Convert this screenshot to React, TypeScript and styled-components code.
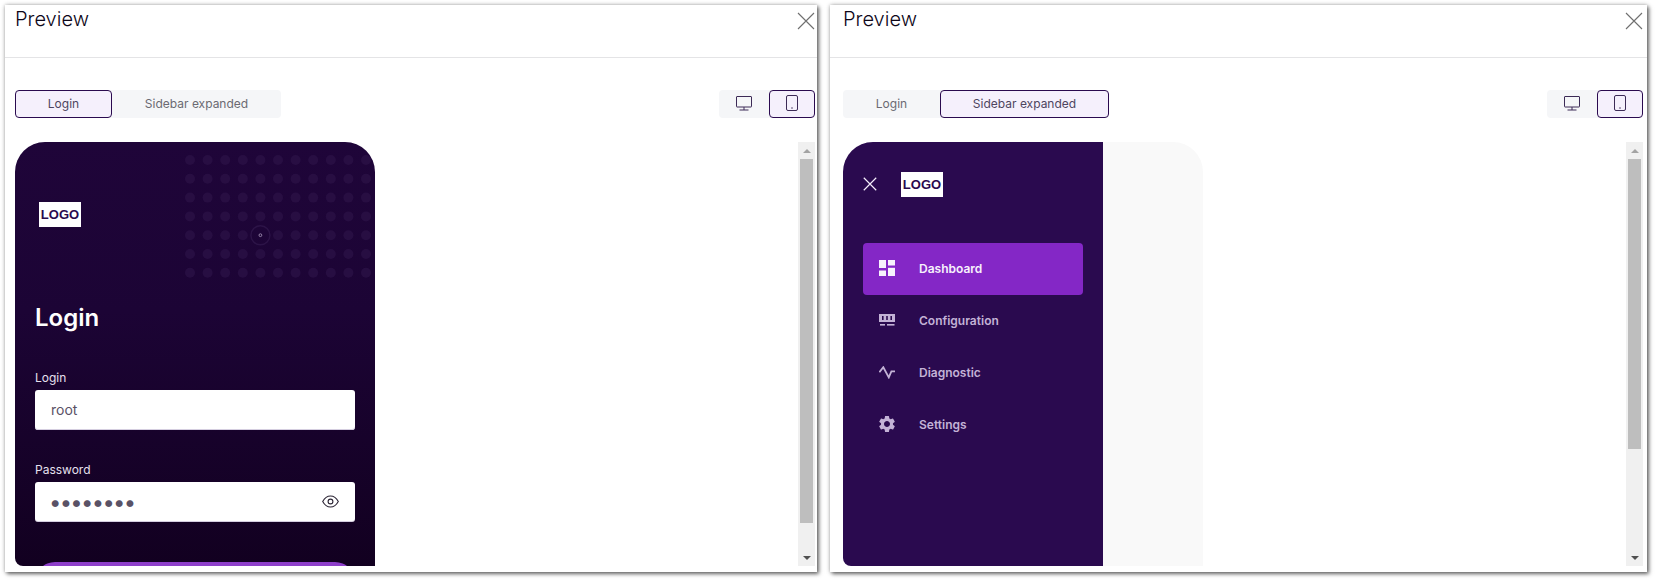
import React, { FC } from 'react';
import styled, { createGlobalStyle } from 'styled-components';
import { MdSettings } from 'react-icons/md';

const Global = createGlobalStyle`
  html, body {
    margin: 0;
    padding: 0;
    background: #fff;
    font-family: Inter, "Liberation Sans", sans-serif;
  }
  * { box-sizing: border-box; }
`;

const Page = styled.div`
  display: flex;
  gap: 13px;
  width: 1656px;
  height: 581px;
  padding: 5px 9px 9px 5px;
  overflow: hidden;
`;

const Panel = styled.section<{ $width: number; $left: number; $right: number }>`
  display: flex;
  flex-direction: column;
  width: ${p => p.$width}px;
  flex: none;
  height: 567px;
  background: #fff;
  box-shadow: 2px 2px 4px rgba(0, 0, 0, 0.55), 0 0 4px rgba(0, 0, 0, 0.3);
  --left: ${p => p.$left}px;
  --right: ${p => p.$right}px;
`;

const Header = styled.header`
  display: flex;
  justify-content: space-between;
  height: 53px;
  flex: none;
  padding: 1px var(--right) 0 var(--left);
  border-bottom: 1px solid #e4e4e6;
`;

const Title = styled.h2`
  margin: 0;
  font-size: 20px;
  line-height: 26px;
  font-weight: 300;
  color: #0e0618;
`;

const CloseButton = styled.button`
  display: block;
  width: 18px;
  height: 18px;
  margin-top: 6px;
  padding: 0;
  border: 0;
  background: none;
  color: #6f6f6f;
`;

const Toolbar = styled.div`
  display: flex;
  justify-content: space-between;
  margin-top: 32px;
  padding: 0 var(--right) 0 var(--left);
`;

const Segments = styled.div`
  display: flex;
  height: 28px;
  background: #f5f6f8;
  border-radius: 4px;
`;

const Segment = styled.button<{ $active?: boolean; $width: number }>`
  display: flex;
  align-items: center;
  justify-content: center;
  width: ${p => p.$width}px;
  height: 28px;
  padding: 0 0 2px;
  font-family: inherit;
  font-size: 12px;
  color: ${p => (p.$active ? '#4e4560' : '#6b6a72')};
  background: ${p => (p.$active ? '#f5f0fc' : 'transparent')};
  border: 1px solid ${p => (p.$active ? '#2a0a4f' : 'transparent')};
  border-radius: 4px;
`;

const Stage = styled.div`
  display: flex;
  justify-content: space-between;
  height: 424px;
  margin-top: 24px;
  padding: 0 var(--right) 0 var(--left);
`;

const Phone = styled.div<{ $variant: 'login' | 'sidebar' }>`
  position: relative;
  display: flex;
  flex-direction: column;
  width: 360px;
  height: 424px;
  overflow: hidden;
  border-radius: 30px 30px 0 8px;
  background: ${p =>
    p.$variant === 'login'
      ? 'linear-gradient(180deg, #1f0539 0%, #1c0435 40%, #120020 100%)'
      : '#f9f9f9'};
`;

const Dots = styled.svg`
  position: absolute;
  top: 12px;
  left: 169px;
  width: 191px;
  height: 128px;
`;

const LoginContent = styled.div`
  position: relative;
  display: flex;
  flex-direction: column;
  padding: 60px 20px 0;
`;

const Logo = styled.div`
  display: flex;
  align-items: center;
  justify-content: center;
  width: 42px;
  height: 25px;
  flex: none;
  font-family: "Liberation Sans", Arial, sans-serif;
  font-size: 13px;
  font-weight: 700;
  color: #2a0a4f;
  background: #fff;
`;

const LoginLogo = styled(Logo)`
  margin-left: 4px;
`;

const Heading = styled.h1`
  margin: 75px 0 1px;
  font-size: 24px;
  line-height: 32px;
  font-weight: 600;
  color: #fff;
`;

const FieldLabel = styled.label`
  display: block;
  font-size: 12px;
  line-height: 16px;
  color: #e6e0ee;
`;

const LoginLabel = styled(FieldLabel)`
  margin-top: 35px;
  margin-bottom: 4px;
`;

const PasswordLabel = styled(FieldLabel)`
  margin-top: 32px;
  margin-bottom: 4px;
`;

const FieldBox = styled.div<{ $segmented?: boolean }>`
  display: flex;
  align-items: center;
  justify-content: space-between;
  width: 320px;
  height: 40px;
  padding: 0 16px 1px;
  font-size: 14px;
  color: #5a5266;
  border-radius: 3px;
  background-color: #fff;
  box-shadow: inset 0 -1px 0 #d5cee0;
  ${p =>
    p.$segmented
      ? `background-image: repeating-linear-gradient(90deg, transparent 0 63px, #fff 63px 64px);`
      : ''}
`;

const PasswordDots = styled.span`
  margin-left: -2px;
  font-size: 22px;
  line-height: 22px;
  letter-spacing: -1.7px;
  color: #5a5266;
`;

const SubmitButton = styled.div`
  width: 320px;
  height: 40px;
  margin-top: 40px;
  flex: none;
  border-radius: 20px;
  background: #8e3fca;
`;

const Sidebar = styled.aside`
  display: flex;
  flex-direction: column;
  width: 260px;
  height: 100%;
  padding: 30px 20px 0;
  background: #2a0a4f;
`;

const SidebarTop = styled.div`
  display: flex;
  align-items: center;
  gap: 24px;
`;

const SidebarClose = styled.div`
  display: flex;
  width: 14px;
  height: 14px;
  margin-bottom: 2px;
  color: #f5eefb;
`;

const NavList = styled.nav`
  display: flex;
  flex-direction: column;
  margin-top: 46px;
`;

const NavItem = styled.div<{ $active?: boolean }>`
  display: flex;
  align-items: center;
  gap: 24px;
  width: 220px;
  height: 52px;
  padding: 0 0 2px 16px;
  font-size: 12px;
  font-weight: 600;
  border-radius: 4px;
  color: ${p => (p.$active ? '#f7f2fc' : '#c3b2d6')};
  background: ${p => (p.$active ? '#8427c6' : 'transparent')};
`;

const NavIcon = styled.span`
  display: flex;
  align-items: center;
  justify-content: center;
  width: 16px;
  height: 16px;
  flex: none;

  svg {
    flex: none;
  }
`;

const Scrollbar = styled.div`
  display: flex;
  flex-direction: column;
  width: 17px;
  height: 424px;
  flex: none;
  background: #f0f0f0;
`;

const ScrollArrow = styled.div`
  display: flex;
  align-items: center;
  justify-content: center;
  width: 17px;
  height: 17px;
  flex: none;
`;

const ArrowUp = styled.i`
  width: 0;
  height: 0;
  border: 4px solid transparent;
  border-top: 0;
  border-bottom: 4px solid #a3a3a3;
`;

const ArrowDown = styled.i`
  width: 0;
  height: 0;
  border: 4px solid transparent;
  border-bottom: 0;
  border-top: 4px solid #505050;
`;

const ScrollTrack = styled.div`
  flex: 1;
  padding: 0 2px;
`;

const ScrollThumb = styled.div<{ $height: number }>`
  height: ${p => p.$height}px;
  background: #bebebe;
`;

const Cross: FC<{ weight?: number }> = ({ weight = 1.1 }) => (
  <svg width="100%" height="100%" viewBox="0 0 18 18" fill="none" stroke="currentColor" strokeWidth={weight}>
    <path d="M1 1l16 16M17 1L1 17" />
  </svg>
);

const MonitorIcon: FC = () => (
  <svg width="16" height="15" viewBox="0 0 16 15" fill="none" stroke="#3c2a56" strokeWidth="1">
    <rect x="0.5" y="0.5" width="15" height="10.5" rx="0.5" />
    <path d="M8 11v3M3.5 14h9" />
  </svg>
);

const TabletIcon: FC = () => (
  <svg width="12" height="16" viewBox="0 0 12 16" fill="none" stroke="#3c2a56" strokeWidth="1">
    <rect x="0.5" y="0.5" width="11" height="15" rx="1.5" />
    <path d="M5.2 13h1.6" />
  </svg>
);

const EyeIcon: FC = () => (
  <svg width="17" height="13" viewBox="0 0 17 13" fill="none" stroke="#2a2333" strokeWidth="1.1">
    <path d="M0.7 6.5C2.6 3 5.4 1 8.5 1s5.9 2 7.8 5.5C14.4 10 11.6 12 8.5 12S2.6 10 0.7 6.5z" />
    <circle cx="8.5" cy="6.5" r="2.4" />
  </svg>
);

const DashboardIcon: FC = () => (
  <svg width="16" height="16" viewBox="0 0 16 16" fill="currentColor">
    <rect x="0" y="0" width="7" height="8" />
    <rect x="9" y="0" width="7" height="5.5" />
    <rect x="0" y="10.5" width="7" height="5.5" />
    <rect x="9" y="7.8" width="7" height="8.2" />
  </svg>
);

const ConfigIcon: FC = () => (
  <svg width="16" height="12" viewBox="0 0 16 12" fill="currentColor">
    <path d="M0 0h16v8H0zM3 2v4h1.6V2zM7.2 2v4h1.6V2zM11.4 2v4H13V2z" fillRule="evenodd" />
    <rect x="1" y="10" width="5" height="1.6" />
    <rect x="8" y="10" width="7.5" height="1.6" />
  </svg>
);

const ActivityIcon: FC = () => (
  <svg width="16" height="13" viewBox="0 0 16 13" fill="none" stroke="currentColor" strokeWidth="1.8">
    <path d="M0.4 6.2L4.3 1.2L9.8 11.4L12.4 5.4H16" />
  </svg>
);

const DOT_COLS = Array.from({ length: 11 }, (_, i) => i);
const DOT_ROWS = Array.from({ length: 7 }, (_, i) => i);

const DotGrid: FC = () => (
  <Dots viewBox="0 0 191 128">
    {DOT_ROWS.map(row =>
      DOT_COLS.map(col => (
        <circle
          key={`${row}-${col}`}
          cx={6 + col * 17.6}
          cy={6 + row * 18.8}
          r="5"
          fill="#2c1347"
          opacity={row === 4 && col === 4 ? 0 : 0.7}
        />
      ))
    )}
    <circle cx="76.4" cy="81.2" r="9.5" fill="none" stroke="#2c1347" strokeWidth="1.5" />
    <circle cx="76.4" cy="81.2" r="1.4" fill="none" stroke="#a999bb" strokeWidth="0.8" />
  </Dots>
);

const LoginScreen: FC = () => (
  <Phone $variant="login">
    <DotGrid />
    <LoginContent>
      <LoginLogo>LOGO</LoginLogo>
      <Heading>Login</Heading>
      <LoginLabel>Login</LoginLabel>
      <FieldBox>root</FieldBox>
      <PasswordLabel>Password</PasswordLabel>
      <FieldBox $segmented>
        <PasswordDots>••••••••</PasswordDots>
        <EyeIcon />
      </FieldBox>
      <SubmitButton />
    </LoginContent>
  </Phone>
);

const NAV = [
  { label: 'Dashboard', icon: <DashboardIcon />, active: true },
  { label: 'Configuration', icon: <ConfigIcon /> },
  { label: 'Diagnostic', icon: <ActivityIcon /> },
  { label: 'Settings', icon: <MdSettings size={20} /> },
];

const SidebarScreen: FC = () => (
  <Phone $variant="sidebar">
    <Sidebar>
      <SidebarTop>
        <SidebarClose>
          <Cross weight={1.5} />
        </SidebarClose>
        <Logo>LOGO</Logo>
      </SidebarTop>
      <NavList>
        {NAV.map(item => (
          <NavItem key={item.label} $active={item.active}>
            <NavIcon>{item.icon}</NavIcon>
            {item.label}
          </NavItem>
        ))}
      </NavList>
    </Sidebar>
  </Phone>
);

interface PreviewProps {
  width: number;
  left: number;
  right: number;
  active: 'login' | 'sidebar';
  thumb: number;
}

const Preview: FC<PreviewProps> = ({ width, left, right, active, thumb }) => (
  <Panel $width={width} $left={left} $right={right}>
    <Header>
      <Title>Preview</Title>
      <CloseButton>
        <Cross />
      </CloseButton>
    </Header>
    <Toolbar>
      <Segments>
        <Segment $width={97} $active={active === 'login'}>Login</Segment>
        <Segment $width={169} $active={active === 'sidebar'}>Sidebar expanded</Segment>
      </Segments>
      <Segments>
        <Segment $width={50}><MonitorIcon /></Segment>
        <Segment $width={46} $active><TabletIcon /></Segment>
      </Segments>
    </Toolbar>
    <Stage>
      {active === 'login' ? <LoginScreen /> : <SidebarScreen />}
      <Scrollbar>
        <ScrollArrow><ArrowUp /></ScrollArrow>
        <ScrollTrack>
          <ScrollThumb $height={thumb} />
        </ScrollTrack>
        <ScrollArrow><ArrowDown /></ScrollArrow>
      </Scrollbar>
    </Stage>
  </Panel>
);

export default function App() {
  return (
    <>
      <Global />
      <Page>
        <Preview width={812} left={10} right={2} active="login" thumb={364} />
        <Preview width={817} left={13} right={4} active="sidebar" thumb={290} />
      </Page>
    </>
  );
}
